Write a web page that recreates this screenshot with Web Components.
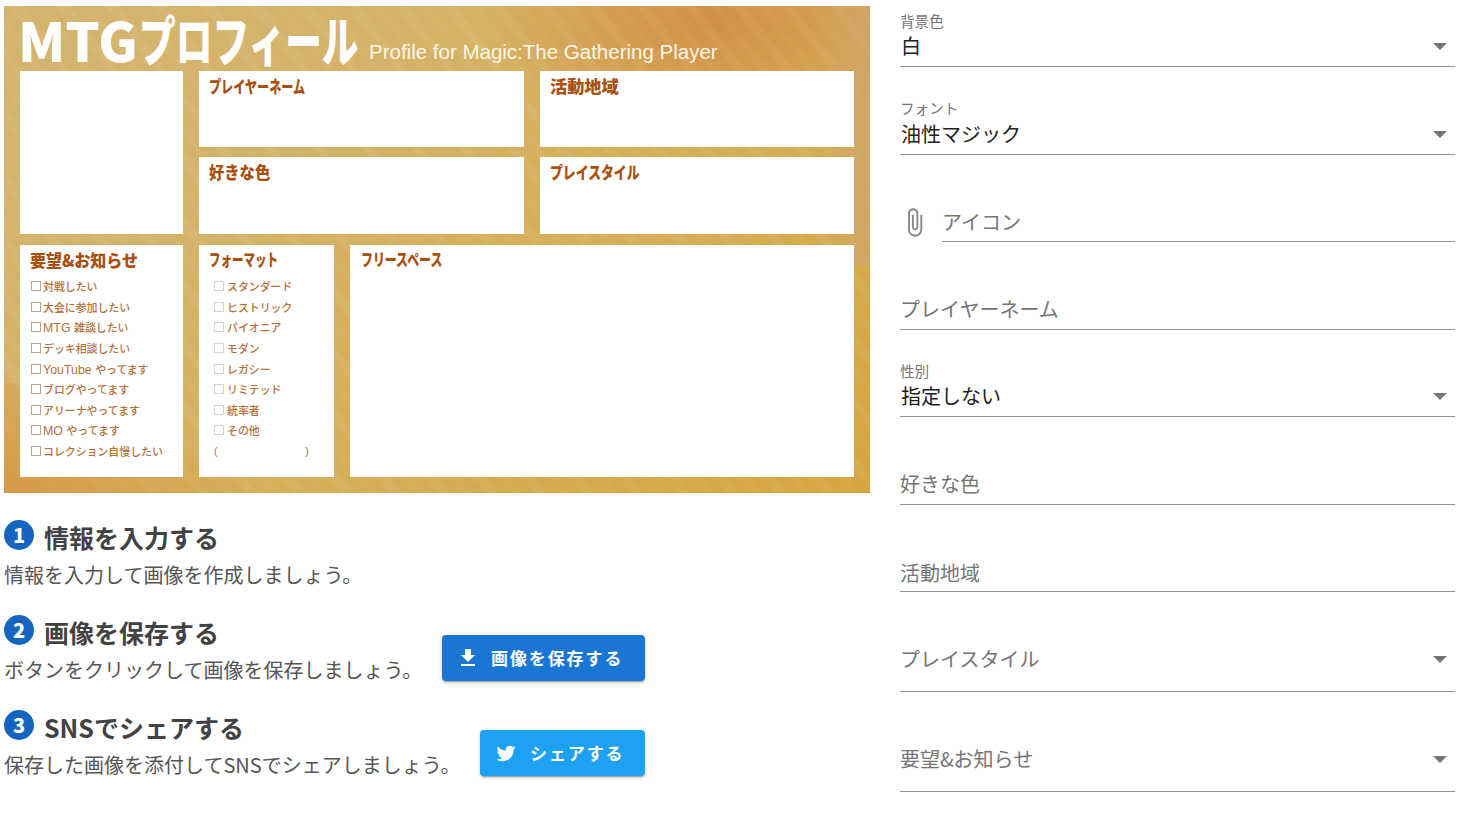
<!DOCTYPE html>
<html lang="ja"><head><meta charset="utf-8"><title>MTG</title>
<style>
html,body{margin:0;background:#fff}
body{font-family:"Noto Sans CJK JP","Noto Sans",sans-serif;width:1467px;height:833px;overflow:hidden}
</style></head><body>
<app-page></app-page>
<script>
const F='"Noto Sans CJK JP","Noto Sans",sans-serif';
function def(name,css,html){
  customElements.define(name,class extends HTMLElement{
    connectedCallback(){
      if(this.shadowRoot)return;
      const r=this.attachShadow({mode:'open'});
      r.innerHTML='<style>'+css+'</style>'+(typeof html==='function'?html(this):html);
    }
  });
}
def('sheet-box',`
:host{display:block;background:#fff;box-sizing:border-box;font-family:${F}}
.t{font-weight:900;font-size:17px;line-height:20px;color:#a8500f;padding:var(--tp,5px 0 0 10px);white-space:nowrap}
.t span{display:inline-block;transform-origin:0 50%}
`,e=>`<div class="t"><span style="transform:scaleX(${e.getAttribute('sx')||1})">${e.getAttribute('title')||''}</span></div><slot></slot>`);
def('check-list',`
:host{display:block;padding:var(--lp,6px 0 0 11px);font-family:"Liberation Sans",${F};font-size:10.9px;color:#b5703a;font-weight:500}
.r{display:flex;align-items:center;height:20.6px;white-space:nowrap;gap:0}
.r i{font-style:normal;font-size:12.4px}
.b{width:8px;height:8px;border:1px solid var(--bc,#bba392);margin-right:var(--bm,2px);flex:none}
`,e=>{
  const items=(e.getAttribute('items')||'').split('|');
  const w=t=>t.replace(/([A-Za-z]+ )/,'<i>$1</i>');
  return items.map(t=>`<div class="r"><span class="b"></span><span>${w(t)}</span></div>`).join('')+(e.hasAttribute('paren')?'<div class="r" style="justify-content:space-between;width:95px"><span>(</span><span>)</span></div>':'');
});
def('profile-sheet',`
:host{display:block;width:866px;height:487px;box-sizing:border-box;padding:0 16px 16px;position:relative;
background:
 repeating-linear-gradient(52deg,rgba(255,255,255,.05) 0 9px,rgba(255,255,255,0) 9px 20px,rgba(255,255,255,.03) 20px 27px,rgba(255,255,255,0) 27px 38px),
 radial-gradient(ellipse 230px 120px at 82% 3%,#d28f45 0,rgba(210,143,69,0) 100%),
 linear-gradient(135deg,#d4b46e 0,#d5b268 30%,#d6ae58 62%,#d5a53f 100%);}
.corner{position:absolute;left:0;bottom:0;width:240px;height:110px;background:linear-gradient(30deg,rgba(214,145,60,.75),rgba(214,145,60,0) 65%)}
.rc{position:absolute;right:0;top:0;width:60px;height:260px;background:linear-gradient(270deg,rgba(205,165,115,.6),rgba(205,165,115,0))}
.head{position:relative;display:flex;height:65px;white-space:nowrap}
.m{font:900 54px/65px ${F};color:#fff;width:114px;height:65px;flex:none;margin-left:-2px;padding-right:2px}
.k{width:224px;flex:none;height:65px}
.k span{display:inline-block;font:900 54px/65px ${F};color:#fff;transform:scaleX(.68);transform-origin:0 50%;margin-left:5px}
.sub{font:400 20.5px/24px "Liberation Sans",sans-serif;color:#fdf6e6;margin:34px 0 0 11px}
.top{position:relative;display:flex;gap:16px}
.photo{width:163px;height:163px;background:#fff}
.g{display:grid;grid-template-columns:325px 314px;grid-template-rows:76px 77px;gap:10px 16px}
.bot{position:relative;display:flex;gap:16px;margin-top:11px;height:232px}
`,`<div class="corner"></div><div class="rc"></div>
<div class="head"><div class="m">MTG</div><div class="k"><span>プロフィール</span></div><span class="sub">Profile for Magic:The Gathering Player</span></div>
<div class="top"><div class="photo"></div><div class="g">
<sheet-box title="プレイヤーネーム" sx=".713"></sheet-box><sheet-box title="活動地域" sx="1.01"></sheet-box>
<sheet-box title="好きな色" sx=".9"></sheet-box><sheet-box title="プレイスタイル" sx=".756"></sheet-box></div></div>
<div class="bot">
<sheet-box title="要望&amp;お知らせ" sx=".94" style="width:163px"><check-list items="対戦したい|大会に参加したい|MTG 雑談したい|デッキ相談したい|YouTube やってます|ブログやってます|アリーナやってます|MO やってます|コレクション自慢したい"></check-list></sheet-box>
<sheet-box title="フォーマット" sx=".676" style="width:135px;--tp:4px 0 0 10px;--lp:7px 0 0 15px;--bm:3px;--bc:#ddd0c6"><check-list paren items="スタンダード|ヒストリック|パイオニア|モダン|レガシー|リミテッド|統率者|その他"></check-list></sheet-box>
<sheet-box title="フリースペース" sx=".7" style="width:504px;--tp:4px 0 0 11px"></sheet-box>
</div>`);
def('step-row',`
:host{display:flex;height:95px;box-sizing:border-box;align-items:flex-start;font-family:${F}}
.h{display:flex;align-items:flex-start;height:36px}
.n{width:30px;height:30px;border-radius:50%;background:#1565c0;color:#fff;font:900 20px/29px ${F};text-align:center;flex:none;margin-top:2px}
.h b{font-weight:700;font-size:25px;line-height:36px;color:#424242;margin:1px 0 0 10px;white-space:nowrap}
.d{font-size:20px;line-height:28px;color:#555;margin-top:7px;white-space:nowrap}
::slotted(*){margin-left:auto}
`,e=>`<div><div class="h"><span class="n">${e.getAttribute('n')}</span><b>${e.getAttribute('head')}</b></div><div class="d">${e.getAttribute('desc')}</div></div><slot></slot>`);
def('action-btn',`
:host{display:inline-flex;align-items:center;height:46px;box-sizing:border-box;border-radius:4px;color:#fff;font:700 17px/46px ${F};letter-spacing:1.9px;box-shadow:0 3px 1px -2px rgba(0,0,0,.2),0 2px 2px rgba(0,0,0,.14),0 1px 5px rgba(0,0,0,.12);white-space:nowrap;background:var(--bg);padding-left:var(--pl,14px)}
`,`<slot name="i"></slot><slot></slot>`);
def('select-field',`
:host{display:block;position:relative;box-sizing:border-box;height:var(--h,87.5px);font-family:${F}}
.w{position:absolute;left:0;right:0;bottom:0;border-bottom:1px solid #949494}
.l{position:absolute;left:0;font-size:14.6px;line-height:20px;color:#757575;white-space:nowrap}
.v,.p{position:absolute;left:1px;font-size:20px;line-height:28px;white-space:nowrap}
.v{color:#212121}.p{color:#757575;left:0}
.a{position:absolute;right:8px;width:0;height:0;border-left:7px solid transparent;border-right:7px solid transparent;border-top:7px solid #757575}
`,e=>{
 const l=e.getAttribute('label')||'',v=e.getAttribute('value'),arrow=e.hasAttribute('arrow');
 const pb=e.getAttribute('pb')||7, ab=e.getAttribute('ab')||17, lb=e.getAttribute('lb')||36;
 return `<div class="w"></div>`+(v?`<div class="l" style="bottom:${lb}px">${l}</div><div class="v" style="bottom:${pb}px">${v}</div>`:`<div class="p" style="bottom:${pb}px">${l}</div>`)+(arrow?`<div class="a" style="bottom:${ab}px"></div>`:'');
});
def('file-field',`
:host{display:flex;align-items:flex-end;height:87px;font-family:${F}}
svg{flex:none;width:31px;height:31px;margin:0 11px 4px -1px;fill:#8a8a8a}
.i{flex:1;border-bottom:1px solid #949494;font-size:20px;line-height:28px;color:#757575;padding-bottom:5px;margin-left:1px}
`,`<svg viewBox="0 0 24 24"><path d="M16.5 6v11.5c0 2.21-1.79 4-4 4s-4-1.79-4-4V5c0-1.38 1.12-2.5 2.5-2.5s2.5 1.12 2.5 2.5v10.5c0 .55-.45 1-1 1s-1-.45-1-1V6H10v9.5c0 1.38 1.12 2.5 2.5 2.5s2.5-1.12 2.5-2.5V5c0-2.21-1.79-4-4-4S7 2.79 7 5v12.5c0 3.04 2.46 5.5 5.5 5.5s5.5-2.46 5.5-5.5V6h-1.5z"/></svg><div class="i">アイコン</div>`);
def('app-page',`
:host{display:flex;width:1467px;height:833px;font-family:${F}}
.l{width:866px;margin:6px 0 0 4px}
.steps{margin-top:25px;width:641px}
.r{width:555px;margin-left:30px}
svg{fill:#fff;flex:none}
`,`<div class="l"><profile-sheet></profile-sheet>
<div class="steps">
<step-row n="1" head="情報を入力する" desc="情報を入力して画像を作成しましょう。"></step-row>
<step-row n="2" head="画像を保存する" desc="ボタンをクリックして画像を保存しましょう。"><action-btn style="--bg:#1976d2;width:203px;margin-top:22px"><svg slot="i" width="24" height="24" viewBox="0 0 24 24" style="margin-right:11px"><path d="M19 9h-4V3H9v6H5l7 7 7-7zM5 18v2h14v-2H5z"/></svg>画像を保存する</action-btn></step-row>
<step-row n="3" head="SNSでシェアする" desc="保存した画像を添付してSNSでシェアしましょう。"><action-btn style="--bg:#1da1f2;width:165px;margin-top:22px;--pl:15px"><svg slot="i" width="22" height="22" viewBox="0 0 24 24" style="margin-right:13px"><path d="M22.46 6c-.77.35-1.6.58-2.46.69.88-.53 1.56-1.37 1.88-2.38-.83.5-1.75.85-2.72 1.05C18.37 4.5 17.26 4 16 4c-2.35 0-4.27 1.92-4.27 4.29 0 .34.04.67.11.98C8.28 9.09 5.11 7.38 3 4.79c-.37.63-.58 1.37-.58 2.15 0 1.49.75 2.81 1.91 3.56-.71 0-1.37-.2-1.95-.5v.03c0 2.08 1.48 3.82 3.44 4.21-.36.1-.74.15-1.13.15-.27 0-.54-.03-.8-.08.54 1.69 2.11 2.95 4 2.98-1.46 1.16-3.31 1.84-5.33 1.84-.34 0-.68-.02-1.02-.06C3.44 20.29 5.7 21 8.12 21 16 21 20.33 14.46 20.33 8.79c0-.19 0-.37-.01-.56.84-.6 1.56-1.36 2.14-2.23z"/></svg>シェアする</action-btn></step-row>
</div></div>
<div class="r">
<select-field style="--h:67px" label="背景色" value="白" arrow></select-field>
<select-field style="--h:88px" label="フォント" value="油性マジック" lb="37" arrow></select-field>
<file-field></file-field>
<select-field style="--h:88px" label="プレイヤーネーム"></select-field>
<select-field style="--h:87px" label="性別" value="指定しない" arrow></select-field>
<select-field style="--h:88px" label="好きな色"></select-field>
<select-field style="--h:87px" label="活動地域" pb="5"></select-field>
<select-field style="--h:100px" label="プレイスタイル" pb="19" ab="29" arrow></select-field>
<select-field style="--h:100px" label="要望&amp;お知らせ" pb="19" ab="29" arrow></select-field>
</div>`);
</script>
</body></html>
